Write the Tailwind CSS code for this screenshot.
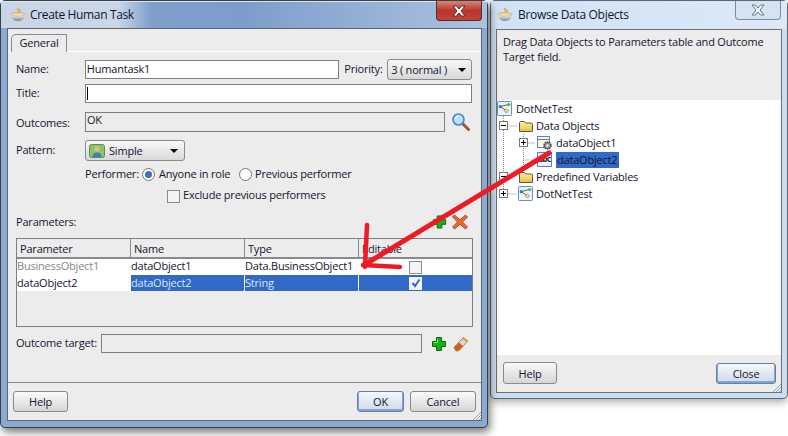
<!DOCTYPE html>
<html>
<head>
<meta charset="utf-8">
<script src="https://cdn.jsdelivr.net/npm/@tailwindcss/browser@4"></script>
</head>
<body class="bg-white">
<svg width="0" height="0" class="absolute">
  <defs>
    <linearGradient id="cup" x1="0" y1="0" x2="0" y2="1"><stop offset="0" stop-color="#eeeeee"/><stop offset="1" stop-color="#8a8a8a"/></linearGradient>
    <linearGradient id="fold" x1="0" y1="0" x2="0" y2="1"><stop offset="0" stop-color="#fff2a8"/><stop offset="1" stop-color="#e8bf3c"/></linearGradient>
    <symbol id="java" viewBox="0 0 16 16"><path d="M8 1c-2 1.500 2 2 0 4M10 2c-1 1 1 1.500 0 3" fill="none" stroke="#e8a020" stroke-width="1.200"/><ellipse cx="8" cy="7.500" rx="7" ry="2" fill="#f3d9a0" stroke="#9a9a9a" stroke-width=".6"/><path d="M1 8c.5 4 3 6 7 6s6.500-2 7-6c-2 1.800-12 1.800-14 0z" fill="url(#cup)"/></symbol>
    <symbol id="plus" viewBox="0 0 16 16"><path d="M5.500 1.500h5v4h4v5h-4v4h-5v-4h-4v-5h4z" fill="#12b312" stroke="#0b6b0b"/><path d="M6.500 3v3.500H3" fill="none" stroke="#7df07d"/></symbol>
    <symbol id="cross" viewBox="0 0 16 16"><path d="M2.500 1L8 5.800 13.500 1 15.500 3 10.500 8l5 5-2 2L8 10.200 2.500 15l-2-2 5-5-5-5z" fill="#ef6a2a" stroke="#a8321a" stroke-width=".8"/></symbol>
    <symbol id="eraser" viewBox="0 0 16 16"><path d="M1 11.500L10.500 1.500 15 5 6 14.500 3 15z" fill="#d8d8d8" stroke="#8a5a2a" stroke-width=".7"/><path d="M1 11.500L5.800 6.500 10 10 6 14.500 3 15z" fill="#d2601a"/><path d="M9 3l4.500 3.500L15 5 10.500 1.500z" fill="#f4a51c"/></symbol>
    <symbol id="link" viewBox="0 0 16 16"><rect x=".5" y=".5" width="15" height="15" rx="1" fill="#eef4fc" stroke="#5b83bd"/><path d="M3.500 6l9-2.500M3.500 6l6 4" stroke="#555" fill="none"/><circle cx="3.500" cy="6" r="1.800" fill="#3d76c9"/><circle cx="12.500" cy="3.800" r="1.800" fill="#66b43c"/><path d="M10 8l2.500 2.500L10 13l-2.500-2.500z" fill="#f2d55c" stroke="#777" stroke-width=".6"/></symbol>
    <symbol id="folder" viewBox="0 0 14 12"><path d="M.5 11.500v-9l1-1h4l1 1.500h6l1 1v7.500z" fill="url(#fold)" stroke="#5b5b4a"/></symbol>
    <symbol id="closex" viewBox="0 0 14 12"><path d="M1 1h3.500L7 4l2.500-3H13L9 6l4 5H9.500L7 8l-2.500 3H1l4-5z"/></symbol>
    <symbol id="grip" viewBox="0 0 8 8"><path d="M8 0L0 8M8 3L3 8M8 6L6 8" stroke="#a8a8a8" fill="none"/></symbol>
  </defs>
</svg>

<div class="relative w-[788px] h-[436px] overflow-hidden bg-white text-[11px] tracking-[-0.2px] leading-none text-[#14142e] font-['Open_Sans','Liberation_Sans',sans-serif]">

  <!-- Right window -->
  <section class="absolute left-[490px] top-0 w-[298px] h-[399px] rounded-[5px] border border-[#5d6670] bg-[#cbdff3] shadow-[0_3px_8px_rgba(0,0,0,0.35)] pl-[5px] pr-[5px] pb-[5px] flex flex-col">
    <header class="h-[28px] shrink-0 flex items-center gap-[5px] bg-gradient-to-r from-[#cfe2f6] to-[#dce9f7] -mx-[5px] px-[6px] text-[12px] tracking-[-0.3px]">
      <svg width="16" height="16" class="shrink-0"><use href="#java"/></svg>
      <span class="pb-[1px]">Browse Data Objects</span>
    </header>
    <div class="absolute left-[244px] top-0 w-[46px] h-[19px] rounded-b-[4px] border border-t-0 border-[#7f8a96] bg-[#d5e4f4] flex items-center justify-center">
      <svg width="14" height="12" fill="#f2f5f8" stroke="#6a7480"><use href="#closex"/></svg>
    </div>
    <div class="relative flex-1 border border-[#6d7176] bg-[#ececec] flex flex-col min-h-0">
      <p class="h-[70px] pl-[6px] pt-[4px] leading-[15px]">Drag Data Objects to Parameters table and Outcome<br>Target field.</p>
      <div class="relative h-[255px] bg-white">
        <svg class="absolute left-0 top-0" width="60" height="110" fill="none" stroke="#888" stroke-dasharray="1 1">
          <path d="M6.500 16v78M6.500 26h14M26.500 34v43M26.500 43h12M26.500 60h12M6.500 94h14"/>
        </svg>
        <div class="relative flex items-center h-[17px] gap-[4px]"><svg width="15" height="15" class="shrink-0"><use href="#link"/></svg><span>DotNetTest</span></div>
        <div class="relative flex items-center h-[17px] pl-[2px]"><span class="w-[9px] h-[9px] border border-[#777] bg-white flex items-center justify-center"><i class="block w-[5px] h-[1px] bg-black"></i></span><svg width="14" height="12" class="ml-[11px] shrink-0"><use href="#folder"/></svg><span class="ml-[3px]">Data Objects</span></div>
        <div class="relative flex items-center h-[17px] pl-[22px]"><span class="relative w-[9px] h-[9px] border border-[#777] bg-white flex items-center justify-center"><i class="block w-[5px] h-[1px] bg-black"></i><i class="absolute block w-[1px] h-[5px] bg-black"></i></span>
          <svg width="16" height="16" viewBox="0 0 16 16" class="ml-[9px] shrink-0"><rect x=".5" y="1.500" width="12" height="11" fill="#fdf6d8" stroke="#5b83bd"/><path d="M.5 4.500h12" stroke="#5b83bd"/><circle cx="10.500" cy="10.500" r="3.500" fill="#8c8c8c" stroke="#444" stroke-dasharray="1.500 .7" stroke-width="1.400"/><circle cx="10.500" cy="10.500" r="1.300" fill="#fff"/></svg>
          <span class="ml-[3px]">dataObject1</span></div>
        <div class="relative flex items-center h-[17px] pl-[40px]">
          <span class="w-[15px] h-[15px] shrink-0 border border-[#5b83bd] bg-[#eef3fb] text-[8px] font-bold font-['DejaVu_Sans_Mono'] flex items-end justify-center tracking-[-0.6px] pb-[2px]">abc</span>
          <span class="ml-[4px] h-[16px] w-[63px] bg-[#3169c6] flex items-center px-[1px]">dataObject2</span></div>
        <div class="relative flex items-center h-[17px] pl-[2px]"><span class="w-[9px] h-[9px] border border-[#777] bg-white flex items-center justify-center"><i class="block w-[5px] h-[1px] bg-black"></i></span><svg width="14" height="12" class="ml-[11px] shrink-0"><use href="#folder"/></svg><span class="ml-[3px]">Predefined Variables</span></div>
        <div class="relative flex items-center h-[17px] pl-[2px]"><span class="relative w-[9px] h-[9px] border border-[#777] bg-white flex items-center justify-center"><i class="block w-[5px] h-[1px] bg-black"></i><i class="absolute block w-[1px] h-[5px] bg-black"></i></span><svg width="15" height="15" class="ml-[10px] shrink-0"><use href="#link"/></svg><span class="ml-[3px]">DotNetTest</span></div>
      </div>
      <div class="flex-1 flex items-start justify-between pl-[6px] pr-[5px] pt-[7px]">
        <button class="w-[54px] h-[22px] rounded-[3px] border border-[#8a8a8a] bg-gradient-to-b from-[#fafafa] to-[#d6d6d6]">Help</button>
        <button class="w-[60px] h-[21px] mt-[1px] rounded-[3px] border border-[#6d7f99] bg-gradient-to-b from-[#f4f8fd] to-[#cfd9e6] shadow-[inset_0_-1px_0_1px_#7fa3dc]">Close</button>
      </div>
      <svg width="8" height="8" class="absolute right-0 bottom-0"><use href="#grip"/></svg>
    </div>
  </section>

  <!-- Left window -->
  <section class="absolute left-0 top-0 w-[488px] h-[428px] rounded-[5px] border border-[#3a4048] bg-[#8aa9d3] shadow-[2px_4px_9px_rgba(0,0,0,0.55)] pl-[6px] pr-[5px] pb-[6px] flex flex-col">
    <header class="relative h-[27px] shrink-0 -ml-[6px] -mr-[5px] flex items-center gap-[4px] pl-[9px] bg-[linear-gradient(90deg,#c7d5e6_0%,#c9d7e8_24%,#7f9fcb_31%,#7d9ecb_50%,#aac2df_100%)] text-[12px] tracking-[-0.35px] shadow-[inset_0_1px_0_#dbe5f1]">
      <svg width="16" height="16" class="shrink-0"><use href="#java"/></svg>
      <span>Create Human Task</span>
    </header>
    <div class="absolute left-[435px] top-0 w-[46px] h-[20px] rounded-b-[4px] border border-t-0 border-[#5a2a2a] bg-gradient-to-b from-[#d8857a] via-[#b8352a] to-[#c0443a] flex items-center justify-center">
      <svg width="14" height="12" fill="#ffffff" stroke="#5a2a2a"><use href="#closex"/></svg>
    </div>

    <main class="relative flex-1 min-h-0 border border-[#5f6670] bg-[#ececec] flex flex-col">
      <div class="h-[23px] shrink-0 pl-[3px] pt-[5px] border-b border-white">
        <div class="w-[56px] h-[18px] pb-[2px] rounded-tl-[5px] border border-b-0 border-[#8a8a8a] bg-[#ececec] flex items-center justify-center">General</div>
      </div>
      <div class="pl-[8px] pr-[9px] flex flex-col">
        <div class="flex items-center h-[21px] mt-[7px]">
          <label class="w-[69px] pb-[2px]">Name:</label>
          <div class="w-[255px] h-[19px] pb-[2px] border border-[#7f7f7f] bg-white flex items-center pl-[1px]">Humantask1</div>
          <label class="ml-[5px] w-[43px] pb-[2px]">Priority:</label>
          <div class="w-[85px] h-[21px] rounded-[3px] border border-[#8a8a8a] bg-gradient-to-b from-[#f8f8f8] to-[#d8d8d8] flex items-center justify-between pl-[3px] pr-[5px]"><span>3 ( normal )</span><i class="w-0 h-0 border-x-[4px] border-x-transparent border-t-[4px] border-t-black"></i></div>
        </div>
        <div class="flex items-center h-[20px] mt-[3px]">
          <label class="w-[69px] pb-[2px]">Title:</label>
          <div class="w-[388px] h-[19px] border border-[#7f7f7f] bg-white flex items-center pl-[1px]"><i class="block w-[1px] h-[13px] bg-black"></i></div>
        </div>
        <div class="flex items-center h-[20px] mt-[9px]">
          <label class="w-[69px] pb-[2px] mt-[2px]">Outcomes:</label>
          <div class="w-[360px] h-[20px] border border-[#7f7f7f] flex items-start pt-[1px] pl-[1px]">OK</div>
          <svg width="20" height="20" viewBox="0 0 20 20" class="ml-[6px] shrink-0"><path d="M11.500 11.500L17.500 17.500" stroke="#9a5a3a" stroke-width="3" stroke-linecap="round"/><circle cx="7.500" cy="7.500" r="5.500" fill="#bfe0fb" stroke="#3f86d4" stroke-width="1.600"/><path d="M4.500 6.500a3.500 3.500 0 0 1 3-2.500" stroke="#fff" fill="none"/></svg>
        </div>
        <div class="flex items-center h-[21px] mt-[8px]">
          <label class="w-[69px] pb-[2px]">Pattern:</label>
          <div class="w-[100px] h-[21px] rounded-[3px] border border-[#8a8a8a] bg-gradient-to-b from-[#f8f8f8] to-[#d8d8d8] flex items-center pl-[3px] pr-[6px]">
            <svg width="16" height="14" viewBox="0 0 16 14" class="shrink-0"><rect x=".5" y=".5" width="15" height="13" rx="2" fill="#8cc26a" stroke="#5e8f42"/><circle cx="8" cy="5" r="2.500" fill="#e9b98a"/><path d="M3.500 13c0-3.500 2-4.500 4.500-4.500s4.500 1 4.500 4.500z" fill="#3e7fc4"/></svg>
            <span class="ml-[4px] flex-1">Simple</span>
            <i class="w-0 h-0 border-x-[4px] border-x-transparent border-t-[4px] border-t-black"></i>
          </div>
        </div>
        <div class="flex items-center h-[16px] mt-[5px] ml-[69px]">
          <span class="w-[57px] pb-[2px]">Performer:</span>
          <span class="w-[13px] h-[13px] rounded-full border border-[#777] bg-white flex items-center justify-center"><i class="block w-[7px] h-[7px] rounded-full bg-[#3f6fc6]"></i></span>
          <span class="ml-[4px] w-[80px] pb-[2px]">Anyone in role</span>
          <span class="w-[13px] h-[13px] rounded-full border border-[#777] bg-white"></span>
          <span class="ml-[3px] pb-[2px]">Previous performer</span>
        </div>
        <div class="flex items-center h-[16px] mt-[6px] ml-[151px]">
          <span class="w-[13px] h-[13px] border border-[#8a8a8a] bg-[#f4f4f4]"></span>
          <span class="ml-[3px] pb-[3px]">Exclude previous performers</span>
        </div>
        <div class="flex items-center h-[17px] mt-[9px]">
          <span class="pb-[1px]">Parameters:</span>
          <svg width="15" height="16" class="ml-auto shrink-0"><use href="#plus"/></svg>
          <svg width="16" height="16" class="ml-[5px] mr-[4px] shrink-0"><use href="#cross"/></svg>
        </div>
        <div class="mt-[8px] w-[457px] h-[89px] border border-[#7f7f7f] bg-[#ececec]">
          <div class="grid grid-cols-[114px_114px_114px_1fr] h-[20px] border-b-2 border-[#8a8a8a]">
            <div class="border-r border-[#8a8a8a] flex items-center pl-[3px]">Parameter</div>
            <div class="border-r border-[#8a8a8a] flex items-center pl-[3px]">Name</div>
            <div class="border-r border-[#8a8a8a] flex items-center pl-[3px]">Type</div>
            <div class="flex items-center pl-[3px]">Editable</div>
          </div>
          <div class="grid grid-cols-[114px_114px_114px_1fr] h-[16px] bg-white">
            <div class="pb-[3px] border-r border-white flex items-center text-[#85858f]">BusinessObject1</div>
            <div class="pb-[3px] border-r border-white flex items-center">dataObject1</div>
            <div class="pb-[3px] border-r border-white flex items-center">Data.BusinessObject1</div>
            <div class="flex items-center justify-center"><span class="w-[13px] h-[13px] border border-[#8a8a8a] bg-[#f4f4f4]"></span></div>
          </div>
          <div class="grid grid-cols-[114px_114px_114px_1fr] h-[16px]">
            <div class="pb-[1px] bg-white flex items-center">dataObject2</div>
            <div class="pb-[1px] bg-[#3169c6] border-r border-white flex items-center text-[#dce6f7]">dataObject2</div>
            <div class="pb-[1px] bg-[#3169c6] border-r border-white flex items-center text-[#dce6f7]">String</div>
            <div class="bg-[#3169c6] flex items-center justify-center"><span class="w-[13px] h-[13px] bg-[#f0f3fa] flex items-center justify-center"><svg width="10" height="10" viewBox="0 0 10 10"><path d="M1.500 5L4 8l4.500-6.500" fill="none" stroke="#3169c6" stroke-width="2"/></svg></span></div>
          </div>
        </div>
        <div class="flex items-center h-[19px] mt-[7px]">
          <label class="w-[85px] pb-[2px]">Outcome target:</label>
          <div class="w-[321px] h-[19px] border border-[#7f7f7f]"></div>
          <svg width="16" height="16" class="ml-[9px] shrink-0"><use href="#plus"/></svg>
          <svg width="16" height="16" class="ml-[6px] shrink-0"><use href="#eraser"/></svg>
        </div>
      </div>
      <div class="mt-[29px] border-t border-[#8a8a8a] flex items-start pl-[5px] pr-[5px] pt-[8px]">
        <button class="w-[55px] h-[21px] rounded-[3px] border border-[#8a8a8a] bg-gradient-to-b from-[#fafafa] to-[#d6d6d6]">Help</button>
        <button class="ml-auto w-[47px] h-[21px] rounded-[3px] border border-[#6d7f99] bg-gradient-to-b from-[#f4f8fd] to-[#cfd9e6] shadow-[inset_0_-1px_0_1px_#7fa3dc]">OK</button>
        <button class="ml-[6px] w-[66px] h-[21px] rounded-[3px] border border-[#8a8a8a] bg-gradient-to-b from-[#fafafa] to-[#d6d6d6]">Cancel</button>
      </div>
      <svg width="8" height="8" class="absolute right-0 bottom-0"><use href="#grip"/></svg>
    </main>
  </section>

  <!-- Hand-drawn red annotation -->
  <svg class="absolute left-0 top-0 pointer-events-none" width="788" height="436" fill="none" stroke="#ed1c24" stroke-linecap="round">
    <path d="M549 153L364 265" stroke-width="5"/>
    <path d="M367 225L365 267" stroke-width="4.500"/>
    <path d="M363 265L400 267" stroke-width="4.500"/>
  </svg>
</div>
</body>
</html>
